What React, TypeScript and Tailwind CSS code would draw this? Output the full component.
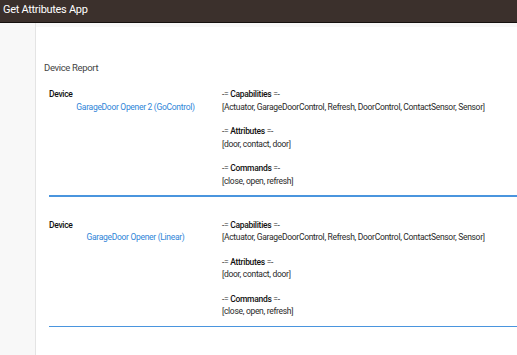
const devices = [
  {
    name: "GarageDoor Opener 2 (GoControl)",
    capabilities: "[Actuator, GarageDoorControl, Refresh, DoorControl, ContactSensor, Sensor]",
    attributes: "[door, contact, door]",
    commands: "[close, open, refresh]",
  },
  {
    name: "GarageDoor Opener (Linear)",
    capabilities: "[Actuator, GarageDoorControl, Refresh, DoorControl, ContactSensor, Sensor]",
    attributes: "[door, contact, door]",
    commands: "[close, open, refresh]",
  },
];

const Section = ({ title, value }: { title: string; value: string }) => (
  <div className="mb-[12px]">
    <div className="h-[12.5px] leading-[12.5px]">
      -= <span className="font-medium text-[#111]">{title}</span> =-
    </div>
    <div className="h-[12.5px] leading-[12.5px]">{value}</div>
  </div>
);

const App = () => {
  return (
    <div
      className="w-[517px] h-[355px] overflow-hidden bg-[#f8f8f8] text-[#2a2a2a]"
      style={{ fontFamily: "Roboto, 'Liberation Sans', sans-serif" }}
    >
      <div className="h-[23px] bg-[#3b302c] border-b border-[#15100e] text-white text-[11px] tracking-[-0.3px] leading-[19px] pl-[3px]">
        Get Attributes App
      </div>
      <div className="flex h-full">
        <div className="w-[36px] shrink-0 border-r border-[#e4e4e4] bg-[#f8f8f8]" />
        <div className="flex-1 bg-white mt-[4px] pl-[8px] pt-[35px]">
          <div className="text-[9.5px] tracking-[-0.35px] text-[#444] leading-[12px] mb-[14px]">Device Report</div>
          {devices.map((d) => (
            <div key={d.name} className="ml-[5px] mb-[22px]">
              <div className="flex text-[8.5px] tracking-[-0.3px] whitespace-nowrap">
                <div className="w-[173px] shrink-0">
                  <div className="h-[12.5px] leading-[12.5px] font-medium text-[#111]">Device</div>
                  <div className="h-[12.5px] leading-[12.5px] text-center text-[#2f85d8]">{d.name}</div>
                </div>
                <div>
                  <Section title="Capabilities" value={d.capabilities} />
                  <Section title="Attributes" value={d.attributes} />
                  <Section title="Commands" value={d.commands} />
                </div>
              </div>
              <div className="h-[1.5px] bg-[#4a95de] -mt-[4px]" />
            </div>
          ))}
        </div>
      </div>
    </div>
  );
};

export default App;
